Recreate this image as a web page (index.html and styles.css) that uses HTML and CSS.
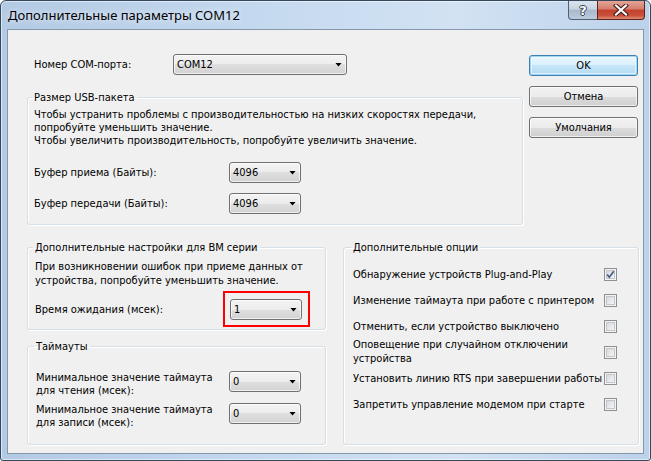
FILE: index.html
```html
<!DOCTYPE html>
<html lang="ru">
<head>
<meta charset="utf-8">
<title>Дополнительные параметры COM12</title>
<link rel="stylesheet" href="styles.css">
</head>
<body>
<div class="window">
  <div class="titlebar">
    <span class="title">Дополнительные параметры COM12</span>
    <div class="caption">
      <div class="cbtn help"><span class="qmark">?</span></div>
      <div class="cbtn close">
        <svg width="16" height="12" viewBox="0 0 16 12">
          <path d="M3 1.5 L13 10.5 M13 1.5 L3 10.5" stroke="#3d1a16" stroke-width="4.2" stroke-linecap="square" fill="none"/>
          <path d="M3 1.5 L13 10.5 M13 1.5 L3 10.5" stroke="#ffffff" stroke-width="2.2" stroke-linecap="square" fill="none"/>
        </svg>
      </div>
    </div>
  </div>
  <div class="client">
    <div class="top">
      <div class="top-left">
        <div class="row com-row">
          <span class="lbl com-lbl">Номер COM-порта:</span>
          <div class="combo combo-wide"><span class="val">COM12</span><span class="arrow"></span></div>
        </div>
        <fieldset class="group usb">
          <legend>Размер USB-пакета</legend>
          <p>Чтобы устранить проблемы с производительностью на низких скоростях передачи,<br>попробуйте уменьшить значение.</p>
          <p class="para2">Чтобы увеличить производительность, попробуйте увеличить значение.</p>
          <div class="rows buf-rows">
            <div class="row">
              <span class="lbl buf-lbl">Буфер приема (Байты):</span>
              <div class="combo combo-small"><span class="val">4096</span><span class="arrow"></span></div>
            </div>
            <div class="row">
              <span class="lbl buf-lbl">Буфер передачи (Байты):</span>
              <div class="combo combo-small"><span class="val">4096</span><span class="arrow"></span></div>
            </div>
          </div>
        </fieldset>
      </div>
      <div class="buttons">
        <div class="btn default">OK</div>
        <div class="btn">Отмена</div>
        <div class="btn">Умолчания</div>
      </div>
    </div>
    <div class="bottom">
      <div class="bottom-left">
        <fieldset class="group bm">
          <legend>Дополнительные настройки для BM серии</legend>
          <p class="bm-text">При возникновении ошибок при приеме данных от<br>устройства, попробуйте уменьшить значение.</p>
          <div class="row wait-row">
            <span class="lbl buf-lbl">Время ожидания (мсек):</span>
            <div class="combo combo-small"><span class="val">1</span><span class="arrow"></span><span class="highlight"></span></div>
          </div>
        </fieldset>
        <fieldset class="group timeouts">
          <legend>Таймауты</legend>
          <div class="trow">
            <span class="lbl t-lbl">Минимальное значение таймаута<br>для чтения (мсек):</span>
            <div class="combo combo-small"><span class="val">0</span><span class="arrow"></span></div>
          </div>
          <div class="trow">
            <span class="lbl t-lbl">Минимальное значение таймаута<br>для записи (мсек):</span>
            <div class="combo combo-small"><span class="val">0</span><span class="arrow"></span></div>
          </div>
        </fieldset>
      </div>
      <fieldset class="group options">
        <legend>Дополнительные опции</legend>
        <div class="opt">
          <span class="opt-lbl">Обнаружение устройств Plug-and-Play</span>
          <span class="check"><svg width="9" height="9" viewBox="0 0 9 9"><path d="M1.2 4.6 L3.4 7.2 L7.8 1.2" stroke="#4a5d86" stroke-width="1.7" fill="none"/></svg></span>
        </div>
        <div class="opt">
          <span class="opt-lbl">Изменение таймаута при работе с принтером</span>
          <span class="check"></span>
        </div>
        <div class="opt">
          <span class="opt-lbl">Отменить, если устройство выключено</span>
          <span class="check"></span>
        </div>
        <div class="opt two-line">
          <span class="opt-lbl">Оповещение при случайном отключении<br>устройства</span>
          <span class="check"></span>
        </div>
        <div class="opt">
          <span class="opt-lbl">Установить линию RTS при завершении работы</span>
          <span class="check"></span>
        </div>
        <div class="opt">
          <span class="opt-lbl">Запретить управление модемом при старте</span>
          <span class="check"></span>
        </div>
      </fieldset>
    </div>
  </div>
</div>
</body>
</html>
```

FILE: styles.css
```css
* { box-sizing: border-box; }

html, body {
  margin: 0;
  padding: 0;
}

body {
  width: 651px;
  height: 461px;
  overflow: hidden;
  background: #ffffff;
  font-family: "DejaVu Sans Condensed", "Liberation Sans", sans-serif;
  font-size: 11px;
  line-height: 13px;
  color: #000000;
}

.window {
  width: 651px;
  height: 461px;
  border: 1px solid #34475d;
  border-radius: 6px 6px 3px 3px;
  background: linear-gradient(to right, #b3cae4 0%, #c2d7ee 35%, #d2e2f3 70%, #bcd2ea 100%);
  box-shadow: inset 0 0 0 1px rgba(255, 255, 255, 0.55);
  display: flex;
  flex-direction: column;
}

.titlebar {
  height: 28px;
  display: flex;
  align-items: flex-start;
  padding: 0 5px 0 7px;
}

.title {
  font-family: "Noto Sans", "DejaVu Sans", sans-serif;
  font-size: 13px;
  line-height: 28px;
  color: #000000;
  text-shadow: 0 0 6px rgba(255, 255, 255, 0.9);
}

.caption {
  margin-left: auto;
  display: flex;
}

.cbtn {
  height: 19px;
  display: flex;
  align-items: center;
  justify-content: center;
  border: 1px solid #4f6074;
  border-top: none;
}

.help {
  width: 29px;
  border-right: none;
  border-radius: 0 0 0 4px;
  background: linear-gradient(to bottom, #dbe4ee 0%, #c8d4e2 45%, #a8b9cc 50%, #bccbdc 100%);
}

.qmark {
  font-family: "DejaVu Sans", sans-serif;
  font-weight: bold;
  font-size: 13px;
  line-height: 13px;
  color: #ffffff;
  text-shadow: 1px 0 0 #33414f, -1px 0 0 #33414f, 0 1px 0 #33414f, 0 -1px 0 #33414f;
}

.close {
  width: 48px;
  border-color: #5d241d;
  border-radius: 0 0 4px 0;
  background: linear-gradient(to bottom, #e4a596 0%, #d47d6c 45%, #c2412d 50%, #c9503a 80%, #de8c74 100%);
}

.client {
  margin: 0 6px 6px 6px;
  height: 425px;
  border: 1px solid #8597ab;
  background: #f0f0f0;
  padding: 24px 0 0 19px;
}

.top {
  display: flex;
}

.top-left {
  width: 496px;
}

.row {
  display: flex;
  align-items: center;
  height: 21px;
}

.lbl {
  flex: none;
}

.com-row {
  padding-left: 7px;
}

.com-lbl {
  width: 139px;
}

.combo {
  position: relative;
  display: flex;
  align-items: center;
  height: 21px;
  border: 1px solid #707070;
  border-radius: 3px;
  background: linear-gradient(to bottom, #f3f3f3 0%, #ececec 50%, #dfdfdf 50%, #d2d2d2 100%);
  box-shadow: inset 0 0 0 1px rgba(255, 255, 255, 0.65);
  padding: 0 4px 0 3px;
}

.combo-wide {
  width: 174px;
}

.combo-small {
  width: 72px;
}

.val {
  flex: none;
}

.arrow {
  margin-left: auto;
  width: 7px;
  height: 4px;
  background: #000000;
  clip-path: polygon(0 0, 100% 0, 50% 100%);
}

.highlight {
  position: absolute;
  left: -8px;
  top: -9px;
  width: 87px;
  height: 36px;
  border: 2px solid #ff0000;
}

.group {
  margin: 0;
  min-width: 0;
  border: 1px solid #d5dfe5;
  border-radius: 3px;
  box-shadow: inset 1px 1px 0 #ffffff, 1px 1px 0 #ffffff;
}

.group legend {
  padding: 0 2px;
  margin-left: -2px;
  line-height: 13px;
}

.group p {
  margin: 0;
}

.usb {
  margin-top: 16px;
  padding: 4px 0 10px 6px;
}

.para2 {
  margin-top: 3px;
}

.buf-rows {
  margin-top: 15px;
  display: flex;
  flex-direction: column;
  gap: 10px;
}

.buf-lbl {
  width: 195px;
}

.buttons {
  margin-left: 6px;
  width: 109px;
  padding-top: 1px;
  display: flex;
  flex-direction: column;
  gap: 10px;
}

.btn {
  height: 21px;
  display: flex;
  align-items: center;
  justify-content: center;
  border: 1px solid #707070;
  border-radius: 3px;
  background: linear-gradient(to bottom, #f2f2f2 0%, #ebebeb 50%, #dddddd 50%, #cfcfcf 100%);
  box-shadow: inset 0 0 0 1px rgba(255, 255, 255, 0.7);
}

.btn.default {
  border-color: #3c7fb1;
  background: linear-gradient(to bottom, #eaf6fd 0%, #d9f0fc 50%, #c6e6f8 50%, #b3dbf1 100%);
  box-shadow: inset 0 0 0 1px #9fd6f3, inset 0 0 0 2px rgba(255, 255, 255, 0.5);
}

.bottom {
  margin-top: 16px;
  display: flex;
  gap: 17px;
}

.bottom-left {
  width: 299px;
  display: flex;
  flex-direction: column;
}

.bm {
  padding: 6px 0 9px 7px;
}

.bm-text {
  line-height: 14px;
}

.wait-row {
  margin-top: 11px;
}

.timeouts {
  margin-top: 10px;
  padding: 18px 0 15px 8px;
}

.trow {
  display: flex;
  align-items: flex-start;
}

.trow + .trow {
  margin-top: 6px;
}

.t-lbl {
  width: 193px;
}

.options {
  width: 296px;
  padding: 7px 21px 0 9px;
}

.opt {
  height: 26px;
  display: flex;
  align-items: center;
}

.opt.two-line .opt-lbl {
  line-height: 14px;
}

.opt-lbl {
  flex: 1;
}

.check {
  flex: none;
  width: 13px;
  height: 13px;
  border: 1px solid #8e8f8f;
  background: linear-gradient(135deg, #cfd3d8 0%, #eeeff0 70%, #f6f6f6 100%);
  box-shadow: inset 0 0 0 1px #f4f4f4, inset 0 0 0 2px #c2c6cc;
  display: flex;
  align-items: center;
  justify-content: center;
}
```
